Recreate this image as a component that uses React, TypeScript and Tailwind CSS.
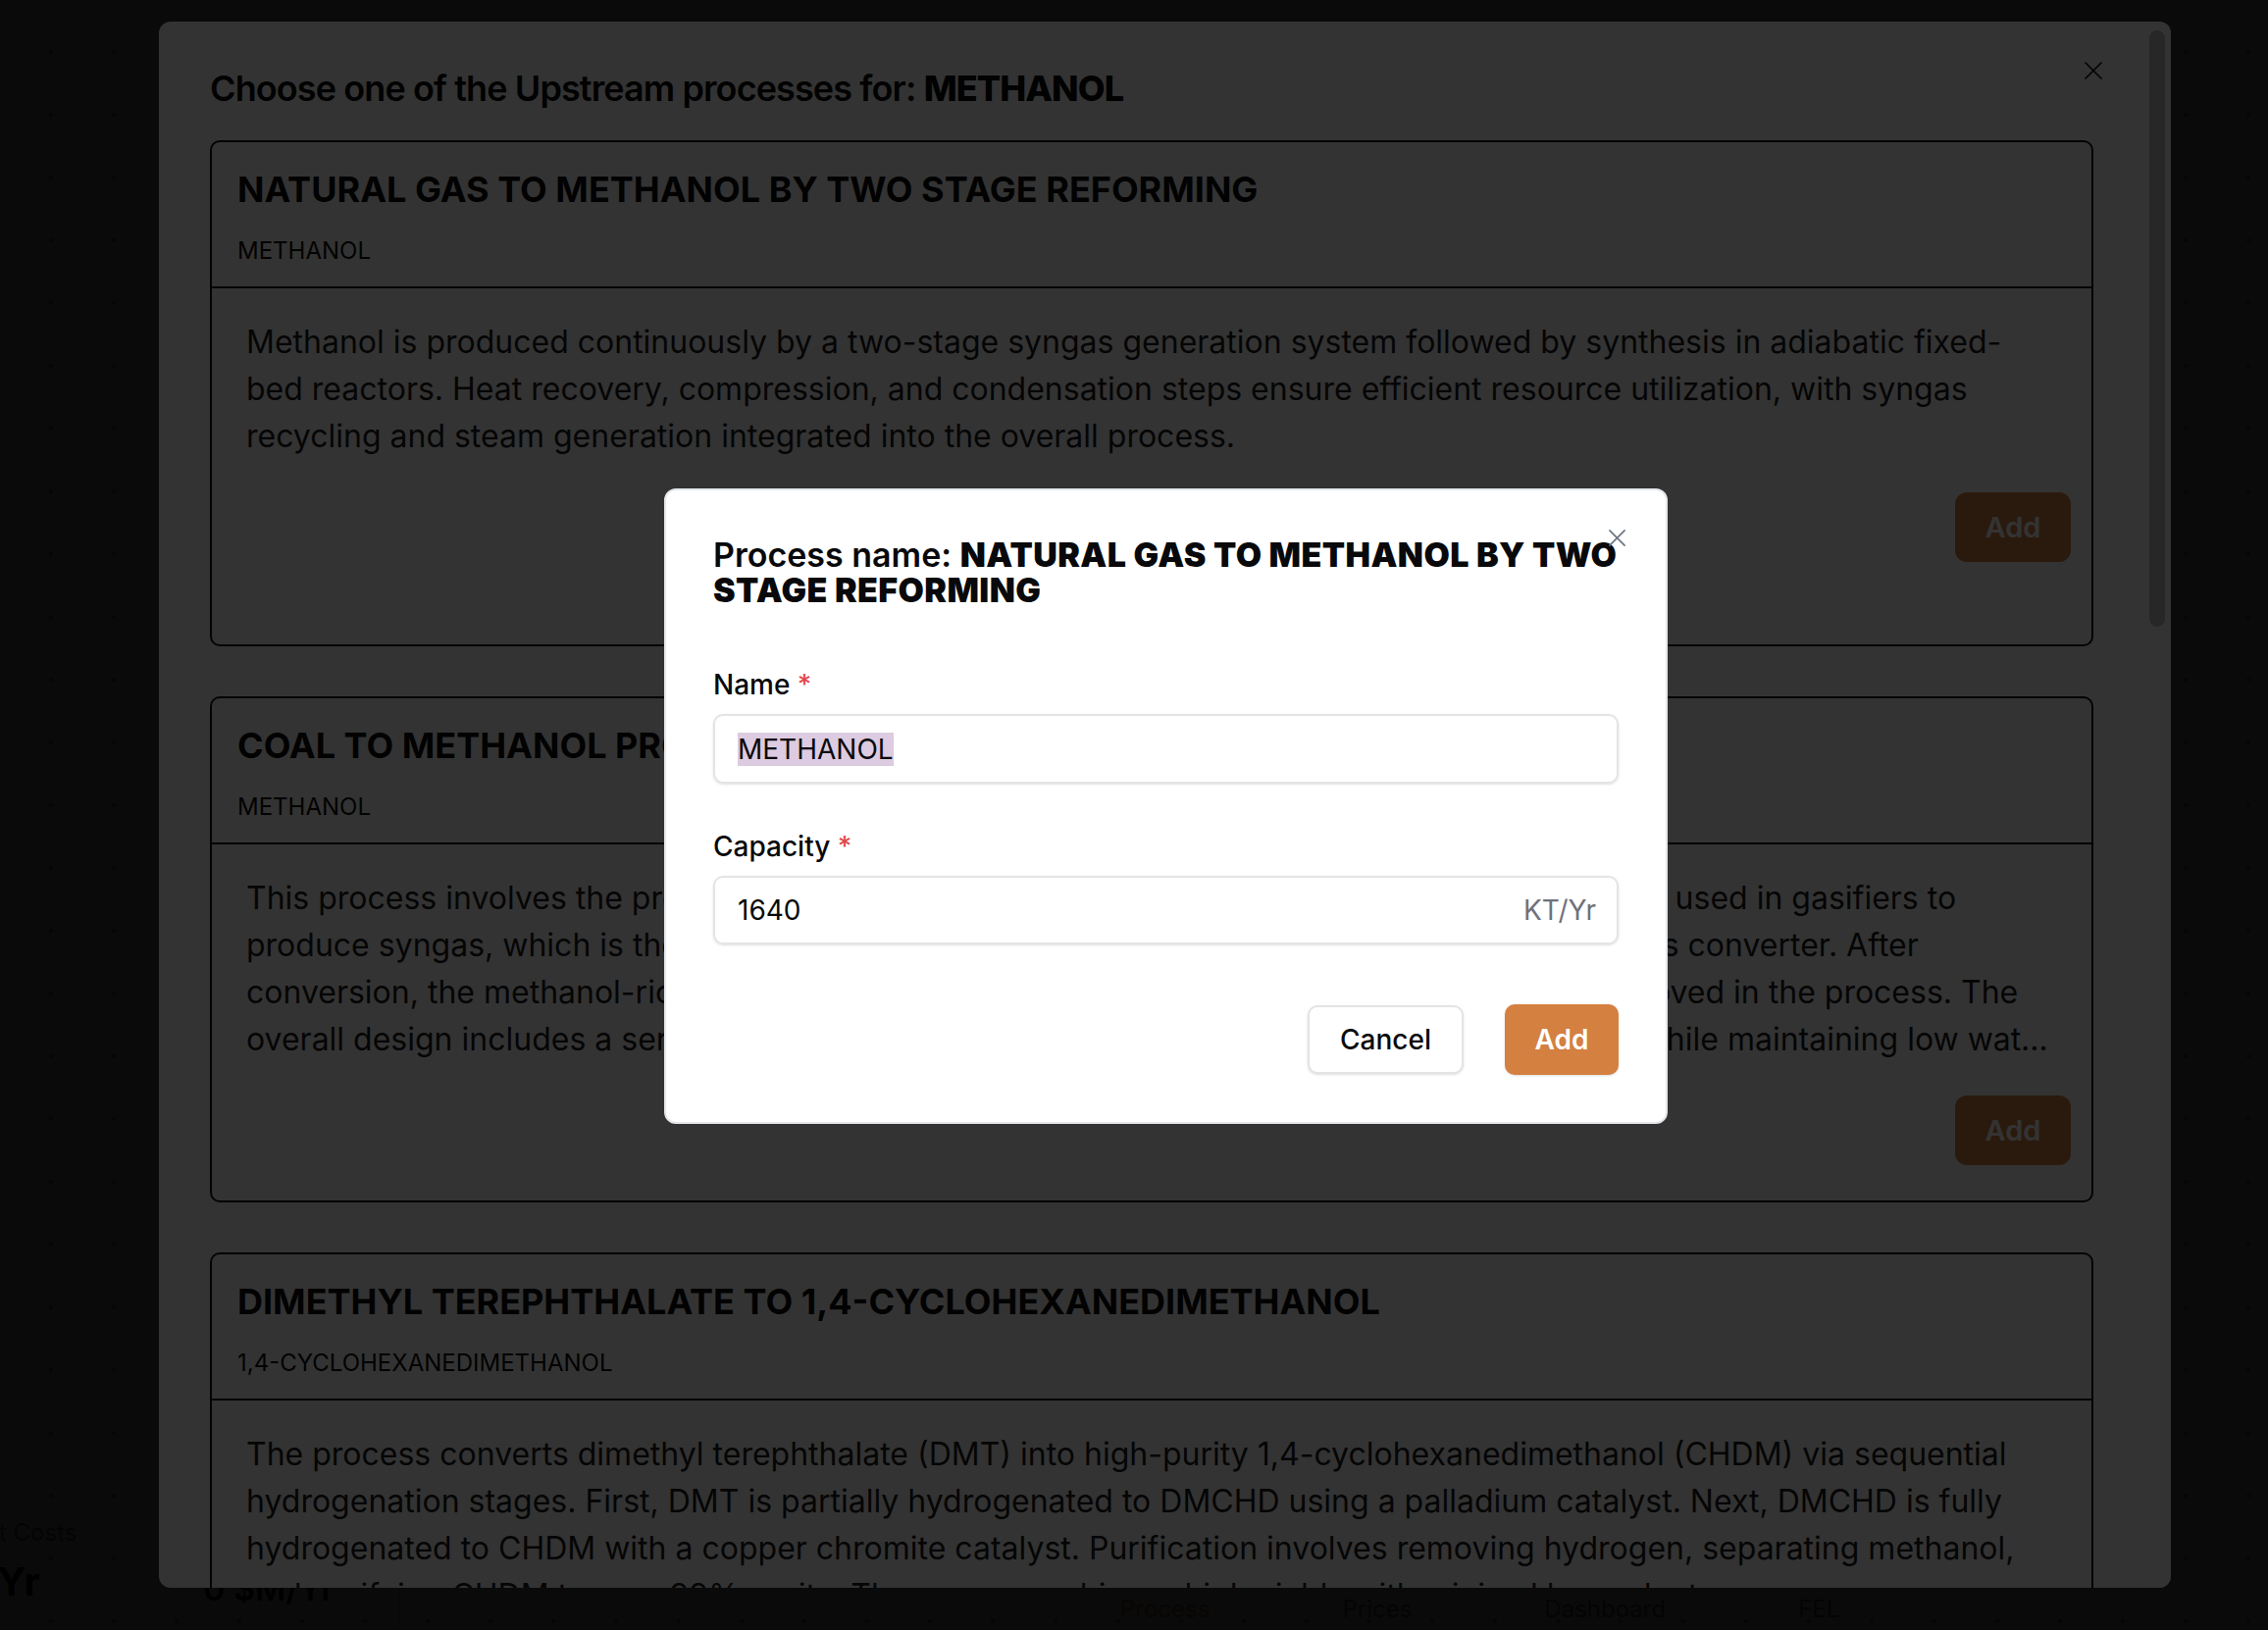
import React from "react";

interface Process {
  id: number;
  name: string;
  product: string;
  description: string;
}

const PROCESSES: Process[] = [
  {
    id: 1,
    name: "NATURAL GAS TO METHANOL BY TWO STAGE REFORMING",
    product: "METHANOL",
    description:
      "Methanol is produced continuously by a two-stage syngas generation system followed by synthesis in adiabatic fixed-bed reactors. Heat recovery, compression, and condensation steps ensure efficient resource utilization, with syngas recycling and steam generation integrated into the overall process.",
  },
  {
    id: 2,
    name: "COAL TO METHANOL PROCESS",
    product: "METHANOL",
    description:
      "This process involves the production of methanol from coal, where coal and oxygen are fed and used in gasifiers to produce syngas, which is then cleaned, shifted, and recompressed before it enters the synthesis converter. After conversion, the methanol-rich stream is purified via distillation, and impurities like CO2 are removed in the process. The overall design includes a series of heat integration and water recycling to maximize efficiency while maintaining low water consumption and minimal emissions.",
  },
  {
    id: 3,
    name: "DIMETHYL TEREPHTHALATE TO 1,4-CYCLOHEXANEDIMETHANOL",
    product: "1,4-CYCLOHEXANEDIMETHANOL",
    description:
      "The process converts dimethyl terephthalate (DMT) into high-purity 1,4-cyclohexanedimethanol (CHDM) via sequential hydrogenation stages. First, DMT is partially hydrogenated to DMCHD using a palladium catalyst. Next, DMCHD is fully hydrogenated to CHDM with a copper chromite catalyst. Purification involves removing hydrogen, separating methanol, and purifying CHDM to over 99% purity. The process achieves high yields with minimal byproducts.",
  },
];

const CloseIcon = ({ size, className }: { size: number; className?: string }) => (
  <svg
    width={size}
    height={size}
    viewBox="0 0 20 20"
    fill="none"
    stroke="currentColor"
    strokeWidth={1.7}
    strokeLinecap="round"
    className={className}
  >
    <path d="M2 2l16 16M18 2L2 18" />
  </svg>
);

const ProcessCard = ({ item }: { item: Process }) => (
  <div className="h-[516px] shrink-0 flex flex-col rounded-[10px] border-2 border-[#111] overflow-hidden">
    <div className="px-[26px] pt-[26px] pb-[20px] border-b-2 border-[#111]">
      <h3 className="text-[36px] leading-[44px] font-bold text-[#0a0a0a]">{item.name}</h3>
      <p className="mt-[25px] text-[24px] leading-[32px] text-[#0a0a0a]">{item.product}</p>
    </div>
    <div className="flex flex-col pl-[35px] pr-[21px] pt-[31px]">
      <p className="pr-[14px] text-[32px] leading-[48px] text-[#1c1c1c] line-clamp-4">
        {item.description}
      </p>
      <button className="self-end mt-[33px] h-[71px] w-[118px] rounded-[12px] bg-[#d38041] text-white text-[29px] font-semibold">
        Add
      </button>
    </div>
  </div>
);

export default function App() {
  return (
    <div className="relative w-[2312px] h-[1662px] overflow-hidden font-['Inter',sans-serif]">
      {/* page underneath both dialogs */}
      <div className="h-full flex flex-col justify-end bg-white bg-[radial-gradient(circle,#9ca3af_2px,transparent_2.5px)] bg-[length:64px_64px] bg-[position:20px_21px]">
        <div className="flex items-end pb-[5px]">
          <div className="w-[1142px] shrink-0 flex items-end">
            <div className="w-[120px] shrink-0 flex flex-col mb-[20px]">
              <span className="-ml-[82px] text-[24px] leading-[32px] text-[#6b7280] whitespace-nowrap">Product Costs</span>
              <span className="-ml-[72px] mt-[10px] text-[40px] leading-[48px] font-bold text-[#111] whitespace-nowrap">KT/Yr</span>
            </div>
            <span className="ml-[87px] mb-[15px] text-[34px] leading-[44px] font-semibold text-[#111] whitespace-nowrap">0 $M/Yr</span>
            <div className="ml-[66px] -mb-[5px] w-px h-[45px] bg-[#d1d5db]" />
          </div>
          <nav className="flex gap-[135px] text-[24px] leading-[32px] text-[#6b7280]">
            <span className="text-[#d38041]">Process</span>
            <span>Prices</span>
            <span>Dashboard</span>
            <span>FEL</span>
          </nav>
        </div>
      </div>

      <div className="absolute inset-0 bg-black/80" />

      {/* upstream process picker */}
      <div className="absolute left-[162px] top-[22px] w-[2051px] h-[1597px] flex bg-white rounded-[12px] overflow-hidden">
        <div className="flex-1 flex flex-col pl-[52px] pr-[48px] pt-[46px] overflow-hidden">
          <h2 className="text-[36px] leading-[45px] font-semibold text-[#0a0a0a] tracking-[-0.025em]">
            Choose one of the Upstream processes for: <span className="font-extrabold">METHANOL</span>
          </h2>
          <div className="mt-[30px] flex flex-col gap-[51px]">
            {PROCESSES.map((p) => (
              <ProcessCard key={p.id} item={p} />
            ))}
          </div>
        </div>
        <div className="w-[31px] shrink-0 pt-[9px] pl-[8px] border-l border-[#f3f3f3] bg-white">
          <div className="w-[16px] h-[608px] rounded-full bg-[#c4c4c4]" />
        </div>
        <button className="absolute right-[69px] top-[40px] text-[#0a0a0a]">
          <CloseIcon size={20} />
        </button>
      </div>

      <div className="absolute inset-0 bg-black/80" />

      {/* add process dialog */}
      <div className="absolute left-[677px] top-[498px] w-[1023px] flex flex-col bg-white rounded-[12px] border-2 border-[#e5e7eb] p-[48px]">
        <h2 className="-mr-[12px] text-[34px] leading-[36px] font-semibold text-[#09090b]">
          Process name: <span className="font-black tracking-[0.012em]">NATURAL GAS TO METHANOL BY TWO STAGE REFORMING</span>
        </h2>
        <button className="absolute right-[40px] top-[39px] text-[#6b7280]">
          <CloseIcon size={19} />
        </button>

        <label className="mt-[58px] text-[28px] leading-[40px] font-medium text-[#09090b]">
          Name <span className="text-[#e5484d]">*</span>
        </label>
        <div className="mt-[10px] h-[71px] flex items-center px-[23px] rounded-[10px] border-2 border-[#e4e4e7] shadow-sm text-[28px] text-[#09090b]">
          <span className="bg-[#dccbe1] leading-[34px]">METHANOL</span>
        </div>

        <label className="mt-[44px] text-[28px] leading-[40px] font-medium text-[#09090b]">
          Capacity <span className="text-[#e5484d]">*</span>
        </label>
        <div className="mt-[10px] h-[70px] flex items-center justify-between pl-[23px] pr-[21px] rounded-[10px] border-2 border-[#e4e4e7] shadow-sm text-[28px]">
          <span className="text-[#09090b]">1640</span>
          <span className="text-[#71717a]">KT/Yr</span>
        </div>

        <div className="mt-[61px] flex justify-end items-center gap-[42px]">
          <button className="h-[70px] px-[31px] rounded-[10px] border-2 border-[#e4e4e7] bg-white shadow-sm text-[28px] font-medium text-[#09090b]">
            Cancel
          </button>
          <button className="h-[72px] w-[116px] rounded-[10px] bg-[#d38041] shadow-sm text-[28px] font-semibold text-white">
            Add
          </button>
        </div>
      </div>
    </div>
  );
}
